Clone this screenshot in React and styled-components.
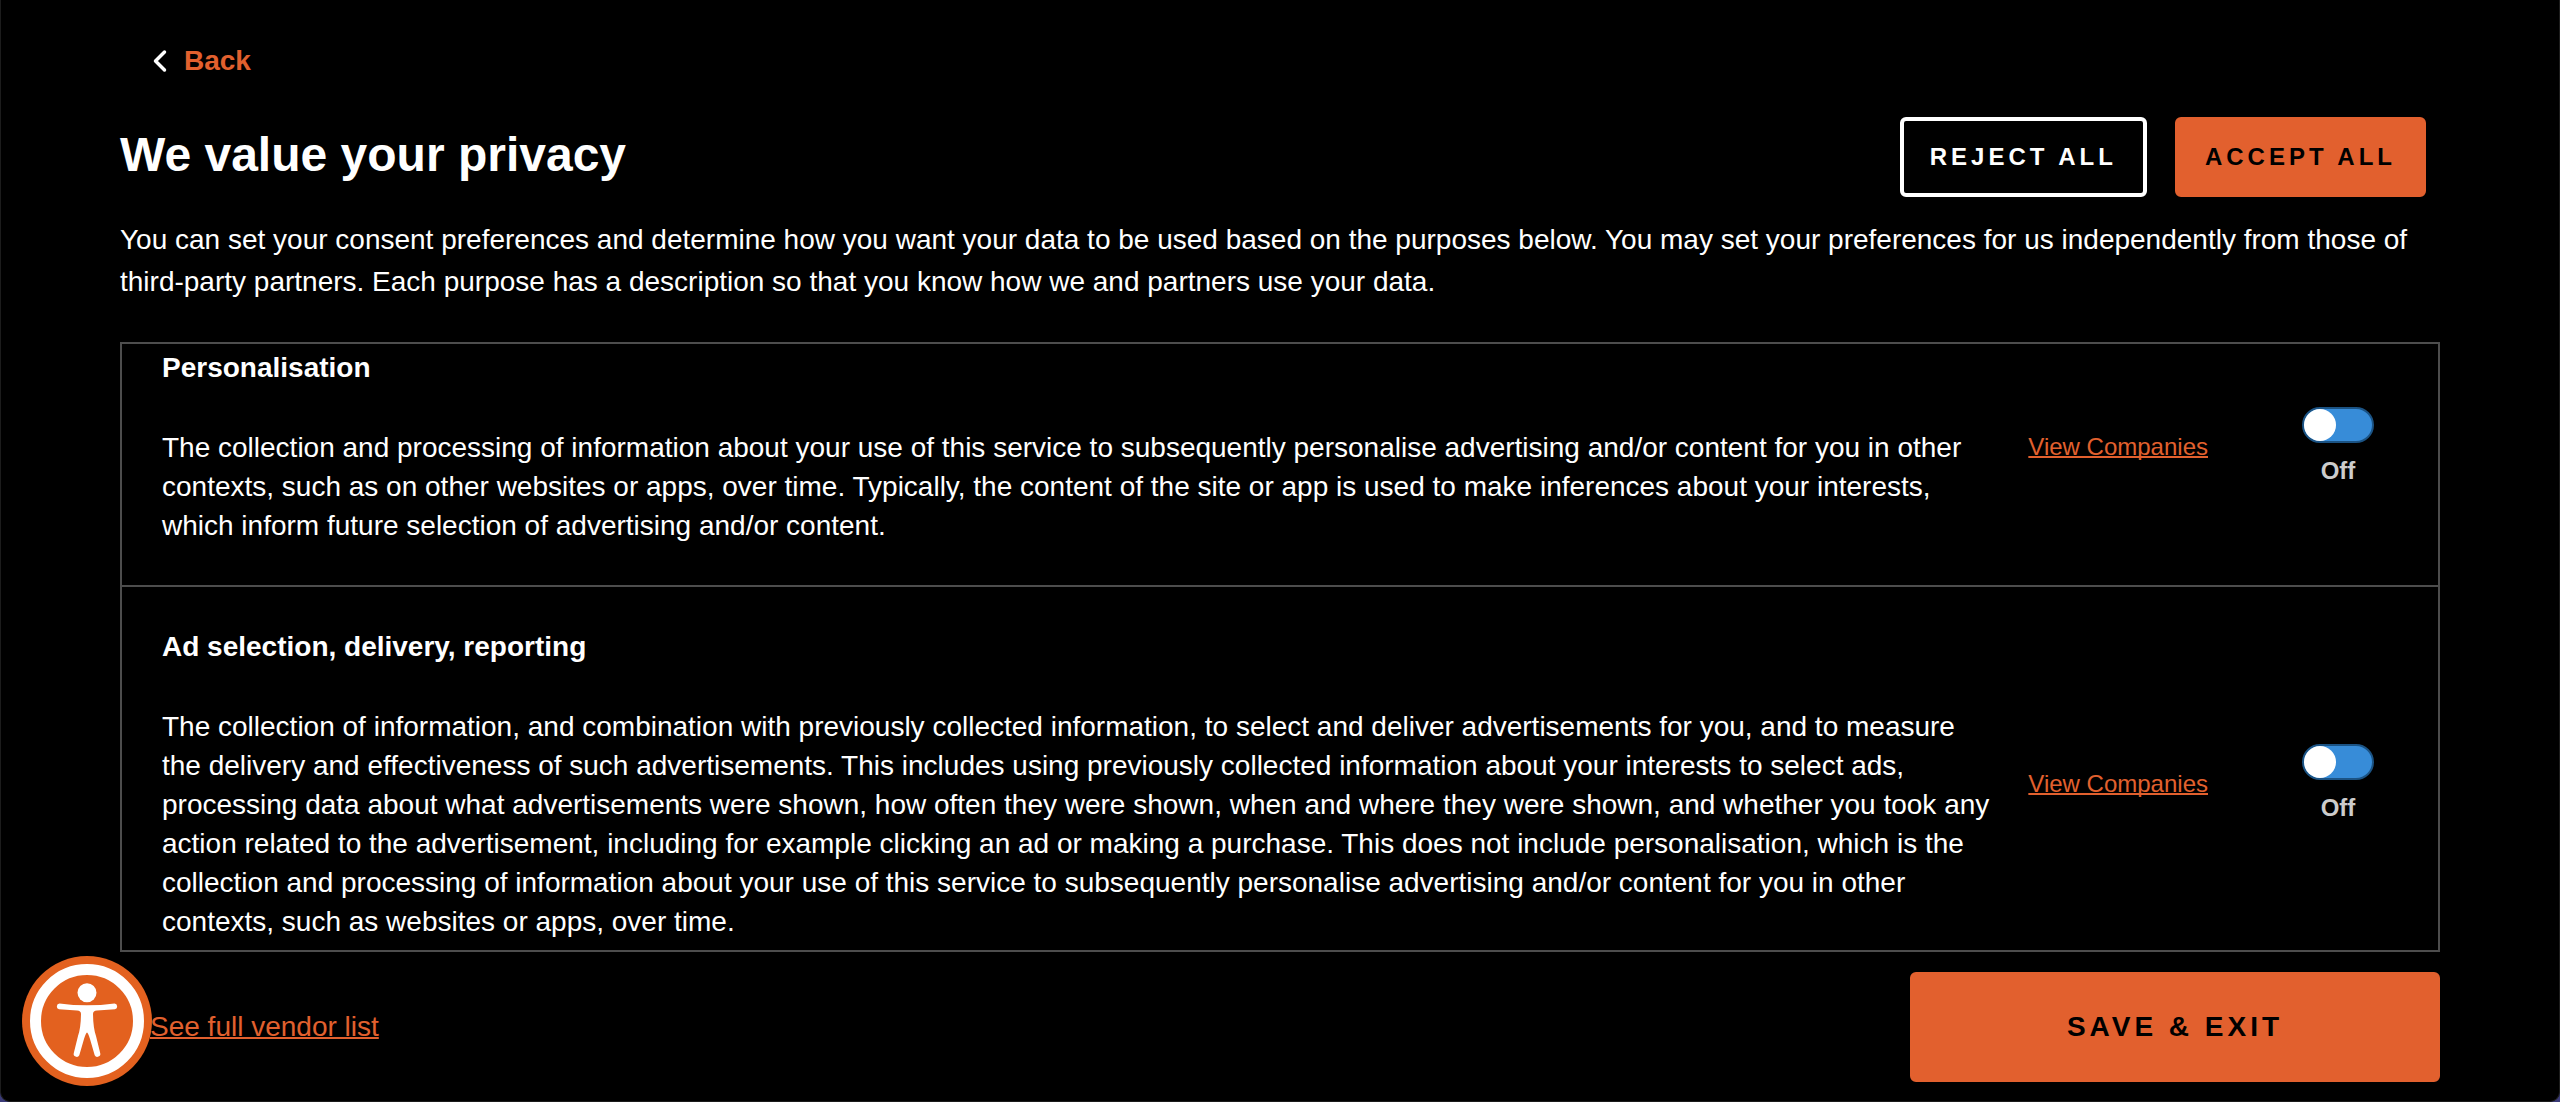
import React, { useLayoutEffect, useRef, useState } from 'react';
import styled, { createGlobalStyle } from 'styled-components';

const orange = '#e2602e';
const line = '#4d4d4d';

const GlobalStyle = createGlobalStyle`
  *, *::before, *::after { box-sizing: border-box; }
  body {
    margin: 0;
    background: #3b3b78;
    font-family: "Liberation Sans", Arial, sans-serif;
  }
  h1, h2, p { margin: 0; }
`;

const Page = styled.main`
  display: flex;
  flex-direction: column;
  height: 100vh;
  padding: 40px 119px 19px;
  background: #000;
  color: #fff;
  border: 1px solid #1c1c1c;
  border-top: 0;
  border-radius: 0 0 10px 10px;
  font-size: 28px;
  line-height: 42px;
`;

const BackButton = styled.button`
  display: flex;
  align-items: center;
  align-self: flex-start;
  gap: 16px;
  margin-left: 32px;
  padding: 0;
  border: 0;
  background: none;
  color: ${orange};
  font: inherit;
  font-weight: 700;
  cursor: pointer;
`;

const Header = styled.header`
  display: flex;
  align-items: flex-start;
  justify-content: space-between;
  margin-top: 35px;
  padding-right: 14px;
`;

const Title = styled.h1`
  font-size: 48px;
  line-height: 76px;
`;

const Actions = styled.div`
  display: flex;
  gap: 28px;
`;

const Button = styled.button`
  height: ${(p) => (p.$large ? 110 : 80)}px;
  min-width: ${(p) => (p.$large ? 530 : 0)}px;
  padding: 0 26px;
  border: 4px solid ${(p) => (p.$outline ? '#fff' : orange)};
  border-radius: 6px;
  background: ${(p) => (p.$outline ? '#000' : orange)};
  color: ${(p) => (p.$outline ? '#fff' : '#000')};
  font: inherit;
  font-size: ${(p) => (p.$large ? 28 : 24)}px;
  font-weight: 700;
  letter-spacing: 4px;
  text-transform: uppercase;
  cursor: pointer;
`;

const Intro = styled.p`
  margin: 22px 0 39px;
`;

const PurposeList = styled.section`
  flex: 1;
  min-height: 0;
  overflow-y: auto;
  scrollbar-width: none;
  border: 2px solid ${line};
`;

const PurposeRow = styled.article`
  display: flex;
  align-items: center;
  padding: 40px 64px 40px 40px;
  border-bottom: 2px solid ${line};
  line-height: 39px;
`;

const PurposeText = styled.div`
  flex: 1;
  display: flex;
  flex-direction: column;
  gap: 41px;
`;

const PurposeTitle = styled.h2`
  font-size: 28px;
`;

const Link = styled.a`
  color: ${orange};
  text-decoration: underline;
  text-decoration-thickness: 2px;
  text-decoration-skip-ink: none;
`;

const CompaniesLink = styled(Link)`
  margin: 0 94px 0 36px;
  font-size: 24px;
  line-height: 28px;
  white-space: nowrap;
`;

const ToggleLabel = styled.label`
  display: flex;
  flex-direction: column;
  align-items: center;
  gap: 12px;
  color: #ccc;
  font-size: 24px;
  font-weight: 700;
  line-height: 32px;
  cursor: pointer;
`;

const ToggleInput = styled.input`
  appearance: none;
  width: 72px;
  height: 36px;
  margin: 0;
  padding: 0;
  border: 2px solid #1b5384;
  border-radius: 18px;
  background: #378cd8;
  cursor: pointer;

  &::before {
    content: "";
    display: block;
    width: 32px;
    height: 32px;
    border-radius: 50%;
    background: #fff;
  }

  &:checked::before { margin-left: auto; }
`;

const Footer = styled.footer`
  display: flex;
  align-items: center;
  justify-content: space-between;
  margin-top: 20px;
  padding-left: 30px;
`;

const AccessibilityButton = styled.button`
  position: fixed;
  left: 22px;
  bottom: 16px;
  width: 130px;
  height: 130px;
  padding: 0;
  border: 0;
  border-radius: 50%;
  background: none;
  cursor: pointer;

  svg { display: block; }
`;

const purposes = [
  {
    id: 'personalisation',
    title: 'Personalisation',
    text: 'The collection and processing of information about your use of this service to subsequently personalise advertising and/or content for you in other contexts, such as on other websites or apps, over time. Typically, the content of the site or app is used to make inferences about your interests, which inform future selection of advertising and/or content.',
  },
  {
    id: 'ad-selection',
    title: 'Ad selection, delivery, reporting',
    text: 'The collection of information, and combination with previously collected information, to select and deliver advertisements for you, and to measure the delivery and effectiveness of such advertisements. This includes using previously collected information about your interests to select ads, processing data about what advertisements were shown, how often they were shown, when and where they were shown, and whether you took any action related to the advertisement, including for example clicking an ad or making a purchase. This does not include personalisation, which is the collection and processing of information about your use of this service to subsequently personalise advertising and/or content for you in other contexts, such as websites or apps, over time.',
  },
];

function Purpose({ id, title, text }) {
  const [on, setOn] = useState(false);
  return (
    <PurposeRow>
      <PurposeText>
        <PurposeTitle>{title}</PurposeTitle>
        <p>{text}</p>
      </PurposeText>
      <CompaniesLink href={`#${id}`}>View Companies</CompaniesLink>
      <ToggleLabel>
        <ToggleInput type="checkbox" role="switch" checked={on} onChange={() => setOn(!on)} />
        {on ? 'On' : 'Off'}
      </ToggleLabel>
    </PurposeRow>
  );
}

export default function App() {
  const list = useRef(null);

  useLayoutEffect(() => {
    list.current.scrollTop = 36;
  }, []);

  return (
    <>
      <GlobalStyle />
      <Page>
        <BackButton type="button">
          <svg width="16" height="24" viewBox="0 0 16 24" fill="none" aria-hidden="true">
            <path d="M12.500 3 3.500 12l9 9" stroke="#fff" strokeWidth="3.500" strokeLinecap="round" strokeLinejoin="round" />
          </svg>
          Back
        </BackButton>
        <Header>
          <Title>We value your privacy</Title>
          <Actions>
            <Button type="button" $outline>Reject all</Button>
            <Button type="button">Accept all</Button>
          </Actions>
        </Header>
        <Intro>
          You can set your consent preferences and determine how you want your data to be used based on the purposes below. You may set your preferences for us independently from those of third-party partners. Each purpose has a description so that you know how we and partners use your data.
        </Intro>
        <PurposeList ref={list}>
          {purposes.map((p) => <Purpose key={p.id} {...p} />)}
        </PurposeList>
        <Footer>
          <Link href="#vendors">See full vendor list</Link>
          <Button type="button" $large>Save &amp; Exit</Button>
        </Footer>
      </Page>
      <AccessibilityButton type="button" aria-label="Accessibility options">
        <svg width="130" height="130" viewBox="0 0 130 130" aria-hidden="true">
          <circle cx="65" cy="65" r="65" fill="#e3611f" />
          <circle cx="65" cy="65" r="51.500" fill="none" stroke="#fff" strokeWidth="11" />
          <circle cx="65" cy="36.700" r="9.500" fill="#fff" />
          <path
            fill="#fff"
            d="M37.500 47.500 Q65 51.200 92.500 47.500 A2.900 2.900 0 0 1 93 53.200 L75 54.600 Q71 55 71 58 Q71.200 72 74 80 L78.200 97 A3 3 0 0 1 72.700 99.300 L68 83 Q66 76.500 65 76.500 Q64 76.500 62 83 L57.300 99.300 A3 3 0 0 1 51.800 97 L56 80 Q58.800 72 59 58 Q59 55 55 54.600 L37 53.200 A2.900 2.900 0 0 1 37.500 47.500Z"
          />
        </svg>
      </AccessibilityButton>
    </>
  );
}
